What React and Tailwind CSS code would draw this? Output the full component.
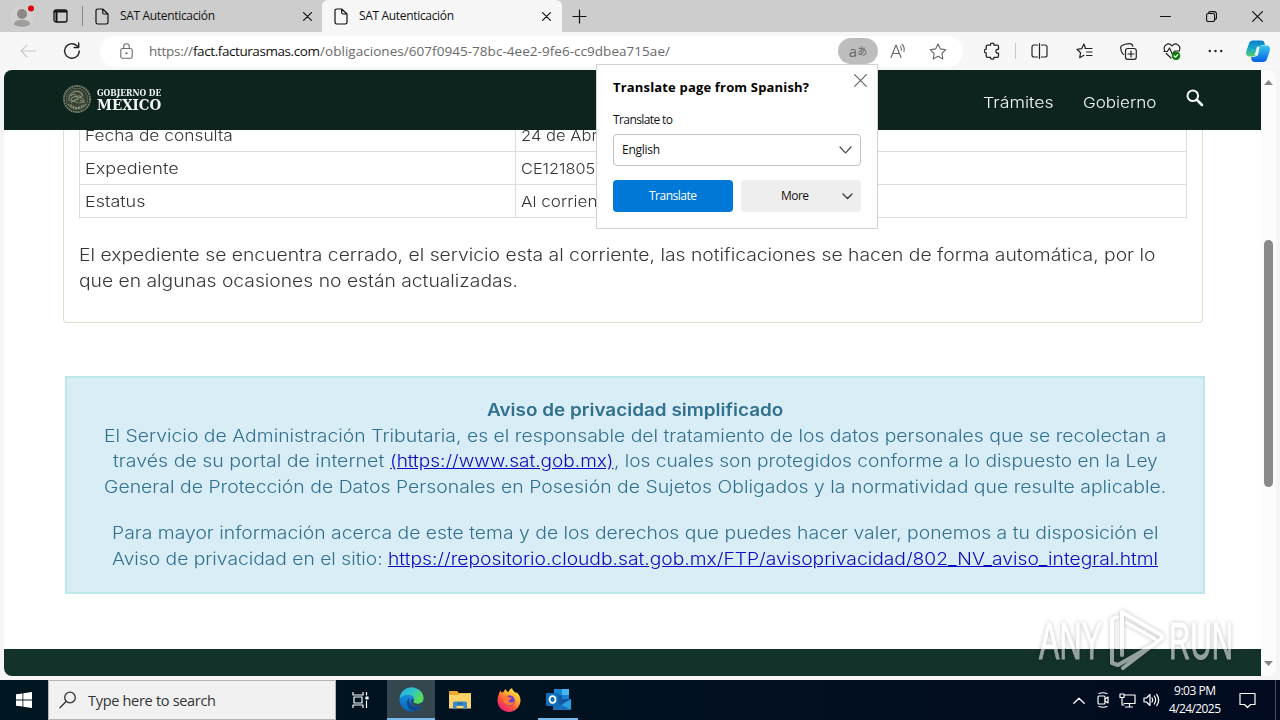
import React, { useLayoutEffect, useRef } from "react";

/* Single line of text tracked out (or in) so that it spans `w` pixels. */
function T({ w, className = "", children }) {
  const ref = useRef(null);
  useLayoutEffect(() => {
    const el = ref.current;
    el.style.letterSpacing = "0px";
    el.style.marginRight = "0px";
    const n = el.textContent.length;
    const ls = (w - el.getBoundingClientRect().width) / (n - 1);
    el.style.letterSpacing = ls + "px";
    el.style.marginRight = -ls + "px";
  }, [w]);
  return (
    <span ref={ref} className={"inline-block shrink-0 whitespace-pre " + className}>
      {children}
    </span>
  );
}

/* Single line of text whose letters are widened so that it spans `w` pixels. */
function Wide({ w, className = "", children }) {
  const ref = useRef(null);
  useLayoutEffect(() => {
    const el = ref.current;
    el.style.transform = `scaleX(${w / el.offsetWidth})`;
  }, [w]);
  return (
    <span className={"flex shrink-0 " + className} style={{ width: w }}>
      <span ref={ref} className="inline-block shrink-0 origin-left whitespace-pre">{children}</span>
    </span>
  );
}

function Icon({ w = 16, h = 16, sw = 1, className = "", children }) {
  return (
    <svg width={w} height={h} viewBox={`0 0 ${w} ${h}`} fill="none" stroke="currentColor" strokeWidth={sw} strokeLinecap="round" strokeLinejoin="round" className={"block shrink-0 " + className}>
      {children}
    </svg>
  );
}

const PageIcon = ({ className }) => (
  <Icon w={14} h={17} sw={1.2} className={className}>
    <path d="M2.7 1h5L13 6v8.300a1.700 1.700 0 0 1-1.700 1.700H2.700A1.700 1.700 0 0 1 1 14.300V2.700A1.700 1.700 0 0 1 2.700 1ZM7.700 1v3.500A1.500 1.500 0 0 0 9.200 6H13" />
  </Icon>
);

const Cross = ({ s = 9, className }) => (
  <Icon w={s} h={s} sw={1.2} className={className}>
    <path d={`M.6.6 ${s - 0.6} ${s - 0.6}M${s - 0.6} .6.6 ${s - 0.6}`} />
  </Icon>
);

function TabStrip() {
  return (
    <div className="flex h-8 bg-[#cdcdcd] text-[#111]">
      <div className="flex w-[83px] items-center">
        <svg width="30" height="26" viewBox="0 0 30 26" className="ml-2 block">
          <circle cx="14" cy="14" r="11.500" fill="#d3d1d0" />
          <circle cx="14" cy="11" r="5" fill="#8b8886" />
          <path d="M6 20.800c0-5.500 16-5.500 16 0 0 4-16 4-16 0Z" fill="#a09d9b" />
          <circle cx="23" cy="5.500" r="3" fill="#e3000f" />
        </svg>
        <Icon w={15} h={14} sw={1.3} className="ml-[15px]">
          <rect x="1" y="1" width="13" height="12" rx="2" />
          <path d="M1.500 2.500h12M3.500 4v8.500" strokeWidth="2" />
        </Icon>
        <div className="ml-auto h-5 w-px bg-[#888]" />
      </div>
      <div className="flex w-[239px] items-center">
        <PageIcon className="ml-3" />
        <T w={95} className="ml-[11px] text-xs">SAT Autenticación</T>
        <Cross className="mt-px ml-[88px]" />
      </div>
      <div className="flex w-60 items-center rounded-t-md bg-[#f7f7f7]">
        <PageIcon className="ml-3" />
        <T w={95} className="ml-[11px] text-xs">SAT Autenticación</T>
        <Cross className="mt-px ml-[88px]" />
      </div>
      <div className="flex flex-1 items-center">
        <Icon w={15} h={15} sw={1.2} className="ml-[10px]"><path d="M7.500 1v13M1 7.500h13" /></Icon>
        <div className="ml-auto flex items-center gap-[35px] pr-[17px]">
          <Icon w={11} h={11} sw={1.100}><path d="M.5 5.500h10" /></Icon>
          <Icon w={11} h={11} sw={1.100}>
            <rect x=".6" y="2.500" width="8" height="8" rx="1.500" />
            <path d="M2.500 2.300C2.500 1 3.300.6 4.300.6h3.800c1.500 0 2.400.9 2.400 2.400v3.500c0 1-.4 1.800-1.500 1.900" />
          </Icon>
          <Cross s={11} />
        </div>
      </div>
    </div>
  );
}

function CopilotIcon() {
  return (
    <svg width="24" height="22" viewBox="0 0 24 22" className="block shrink-0">
      <defs>
        <linearGradient id="cpa" x1="0" y1="0" x2="0" y2="1"><stop offset="0" stopColor="#087bd0" /><stop offset=".5" stopColor="#17a8c6" /><stop offset="1" stopColor="#58cc71" /></linearGradient>
        <linearGradient id="cpb" x1="0" y1="0" x2="0" y2="1"><stop offset="0" stopColor="#35c8ee" /><stop offset="1" stopColor="#0760e6" /></linearGradient>
      </defs>
      <path d="M7 .5h8c2 0 3 .7 3.500 2.500L19 5h-2c-2 0-3 1-3.500 2.500L11.500 14c-.6 2-2 2.500-4 2.500H3.500C.6 16.500-.4 14 .4 11L3 3.500C3.600 1.500 5 .5 7 .5Z" fill="url(#cpa)" />
      <path d="M17 22H9c-2 0-3-.7-3.500-2.500L5 17h2.500c2.500 0 3.500-1 4-2.500L13.500 8c.6-2 2-2.500 4-2.500h3c3 0 4 2.500 3.200 5.500L21 19c-.6 2-2 3-4 3Z" fill="url(#cpb)" />
      <path d="M11 6.500h2.500l-1.500 9H8.500Z" fill="#e4f8fd" />
    </svg>
  );
}

function Toolbar() {
  return (
    <div className="flex h-[38px] items-center bg-[#f7f7f7] text-[#242424]">
      <Icon w={16} h={14} sw={1.100} className="ml-5 text-[#c9c9c9]"><path d="M15.500 7H1M7 1 1 7l6 6" /></Icon>
      <Icon w={18} h={18} sw={1.400} className="ml-[27px]">
        <path d="M16.200 9A7.300 7.300 0 1 1 13.700 3.500L15.700 5.300M15.700 1v4.500h-4.500" />
      </Icon>
      <div className="ml-[19px] flex h-[31px] w-[863px] items-center rounded-full bg-white">
        <Icon w={13} h={16} sw={1.100} className="mb-px ml-5 text-[#6b6b6b]">
          <rect x=".8" y="5.500" width="11.400" height="9.700" rx="1.800" />
          <path d="M3.700 5.300V3.500a2.800 2.800 0 0 1 5.600 0v1.800" />
          <circle cx="6.500" cy="10.300" r=".6" fill="currentColor" />
        </Icon>
        <T w={44} className="ml-[16px] text-[13.500px] text-[#6a6a6a]">https://</T>
        <T w={127} className="text-[13.500px] text-[#111]">fact.facturasmas.com</T>
        <T w={350} className="text-[13.500px] text-[#6a6a6a]">/obligaciones/607f0945-78bc-4ee2-9fe6-cc9dbea715ae/</T>
        <div className="ml-auto flex h-[26px] w-10 items-center justify-center rounded-full bg-[#bdbdbd] text-[#666]">
          <span className="text-[15px] leading-none">a</span>
          <span className="font-['Noto_Sans_CJK_JP',sans-serif] text-[10px] leading-none">あ</span>
        </div>
        <Icon w={18} h={16} sw={1.100} className="ml-3 text-[#666]">
          <path d="M1 14.500 6 2l5 12.500M2.700 10.500h6.500M10.500 3.500q1.300 1.500.8 3.800M12 1.500q3 2.700 1.900 7" />
        </Icon>
        <Icon w={18} h={17} sw={1.100} className="mr-4 ml-[21px] text-[#666]">
          <path d="m9 1 2.400 4.900 5.400.8-3.900 3.800.9 5.400L9 13.300l-4.800 2.600.9-5.400L1.200 6.700l5.400-.8Z" />
        </Icon>
      </div>
      <Icon w={17} h={18} sw={1.300} className="ml-[21px]">
        <path d="M3.500 3.200h3C6 .3 10.500.3 10 3.200h3.200a1.300 1.300 0 0 1 1.300 1.300v2.800c-3.500-.5-3.500 4.300 0 3.800V14a1.300 1.300 0 0 1-1.300 1.300H10c.5 2.500-4 2.500-3.500 0h-3A1.300 1.300 0 0 1 2.200 14v-3c-2.500 0-2.500-3.800 0-3.800V4.500a1.300 1.300 0 0 1 1.300-1.300Z" />
      </Icon>
      <div className="ml-[14px] h-4 w-px bg-[#c8c8c8]" />
      <Icon w={17} h={16} sw={1.200} className="ml-[15px]">
        <path d="M6.500 2H3a2 2 0 0 0-2 2v8a2 2 0 0 0 2 2h3.500M8.500.6v14.800M10.500 2H14a2 2 0 0 1 2 2v8a2 2 0 0 1-2 2h-3.500" />
      </Icon>
      <Icon w={17} h={17} sw={1.200} className="ml-7">
        <path d="M9.500 5.300 7.900 1 5.800 5.600 1 6.300l3.600 3.400-.9 5 4.200-2.400M9 5.500h7M10.500 9H16M10.500 12.500H16" />
      </Icon>
      <Icon w={17} h={17} sw={1.200} className="ml-[27px]">
        <rect x="5.500" y="5.500" width="10.800" height="10.800" rx="2.300" />
        <path d="M3.700 11.500C1.800 11 .3 5.500.8 3.800 1.500 1.500 9 .2 11 .9c1.200.4 1.700 1.400 1.900 2.400M11 8v6M8 11h6" />
      </Icon>
      <Icon w={18} h={17} sw={1.200} className="ml-[26px]">
        <path d="M1.700 7.500C-.5 2.500 5.500-1.500 9 3c3.500-4.500 9.500-.5 7.300 4.500M.8 8.500h3.500L6.500 5l3 6.500 2-3.500h5M3.300 10.500 8 15" />
        <circle cx="13" cy="12.800" r="3.700" fill="#107c10" stroke="#107c10" />
        <path d="m11.200 13 1.300 1.200 2.400-2.600" stroke="#fff" />
      </Icon>
      <Icon w={15} h={4} sw={0} className="ml-[27px]">
        <g fill="#242424"><circle cx="1.800" cy="2" r="1.200" /><circle cx="7.500" cy="2" r="1.200" /><circle cx="13.200" cy="2" r="1.200" /></g>
      </Icon>
      <div className="ml-[23px]"><CopilotIcon /></div>
    </div>
  );
}

function Seal() {
  return (
    <svg width="30" height="30" viewBox="0 0 30 30" fill="none" className="mb-0.5 block shrink-0">
      <circle cx="15" cy="15" r="13" stroke="#757a65" strokeWidth="2" strokeDasharray="2 .5" />
      <circle cx="15" cy="15" r="11" fill="#374337" stroke="#707660" strokeWidth=".7" />
      <path d="M7 17c-1-6 5-12 11-9 3 1 3 4 1 5-2-2-4-1-4 1 3-1 6 0 7 3M9 19c3-5 5-2 8-4M8 12c4-3 6-2 7 1-3-1-5 0-6 3 2 2 5 1 7 3M12 8c3-2 7 0 9 4M18 16l4 2-5 1" stroke="#858970" strokeWidth="1.100" />
      <path d="M6 20c4 6 14 6 18 0M8.500 20.500c4 4 9 4 13 0" stroke="#8f9279" strokeWidth="1.200" strokeDasharray="2 .8" />
    </svg>
  );
}

function SiteHeader() {
  return (
    <div className="flex h-[60px] shrink-0 items-center bg-[#0c231e] text-[#f3f6f5]">
      <div className="ml-[58px]"><Seal /></div>
      <div className="mb-px ml-[5px] flex flex-col font-['DejaVu_Serif',serif] font-bold">
        <Wide w={64} className="text-[8.500px] leading-[10px]">GOBIERNO DE</Wide>
        <Wide w={64} className="text-[14.500px] leading-[13px]">MÉXICO</Wide>
      </div>
      <div className="ml-auto flex items-center font-[Inter,sans-serif] text-[15px] font-light">
        <Wide w={71} className="mt-1.5">Trámites</Wide>
        <Wide w={74} className="mt-1.5 ml-[29px]">Gobierno</Wide>
        <Icon w={18} h={18} sw={2} className="mt-[-4px] mr-[57px] ml-[29px]">
          <circle cx="6.800" cy="6.800" r="5.300" />
          <path d="m11 11 5 5" strokeWidth="2.600" />
        </Icon>
      </div>
    </div>
  );
}

function Row({ label, value, lw, vw }) {
  return (
    <div className="flex h-[33px] shrink-0 items-center border-b border-[#ddd]">
      <div className="flex h-full w-[437px] items-center border-x border-[#ddd] pt-0.5 pl-[5px]"><Wide w={lw}>{label}</Wide></div>
      <div className="flex h-full flex-1 items-center border-r border-[#ddd] pt-0.5 pl-[5px]"><Wide w={vw}>{value}</Wide></div>
    </div>
  );
}

function Page() {
  return (
    <div className="flex w-[1257px] flex-col overflow-hidden rounded-l-lg bg-white font-[Inter,sans-serif] font-light">
      <SiteHeader />
      <div className="ml-[59px] h-[193px] w-[1140px] rounded-b border-x border-b border-[#dfe0cb] px-[15px] text-[#363638]">
        <div className="flex h-[88px] flex-col justify-end overflow-hidden text-[15px]">
          <Row label="Fecha de consulta" lw={148} value="24 de Abril" vw={84} />
          <Row label="Expediente" lw={94} value="CE121805" vw={74} />
          <Row label="Estatus" lw={61} value="Al corriente" vw={91} />
        </div>
        <div className="mt-6 flex flex-col text-[17px] leading-[26px]">
          <Wide w={1076}>El expediente se encuentra cerrado, el servicio esta al corriente, las notificaciones se hacen de forma automática, por lo</Wide>
          <Wide w={439}>que en algunas ocasiones no están actualizadas.</Wide>
        </div>
      </div>
      <div className="mt-[53px] ml-[61px] flex h-[218px] w-[1140px] shrink-0 flex-col items-center border-2 border-[#bce8ea] bg-[#d9edf7] pt-5 text-[17px] leading-[25.500px] text-[#31708f]">
        <Wide w={296} className="font-semibold">Aviso de privacidad simplificado</Wide>
        <Wide w={1062}>El Servicio de Administración Tributaria, es el responsable del tratamiento de los datos personales que se recolectan a</Wide>
        <div className="flex">
          <Wide w={277}>{"través de su portal de internet "}</Wide>
          <Wide w={224} className="text-[#0a0ac0] underline">(https://www.sat.gob.mx)</Wide>
          <Wide w={544}>, los cuales son protegidos conforme a lo dispuesto en la Ley</Wide>
        </div>
        <Wide w={1062}>General de Protección de Datos Personales en Posesión de Sujetos Obligados y la normatividad que resulte aplicable.</Wide>
        <Wide w={1046} className="mt-[21px]">Para mayor información acerca de este tema y de los derechos que puedes hacer valer, ponemos a tu disposición el</Wide>
        <div className="flex">
          <Wide w={276}>{"Aviso de privacidad en el sitio: "}</Wide>
          <Wide w={770} className="text-[#0a0ac0] underline">https://repositorio.cloudb.sat.gob.mx/FTP/avisoprivacidad/802_NV_aviso_integral.html</Wide>
        </div>
      </div>
      <div className="mt-auto h-[27px] shrink-0 bg-[#13322b]" />
    </div>
  );
}

function Scrollbar() {
  return (
    <div className="flex w-[15px] flex-col items-center rounded-r-lg bg-[#fcfcfc] py-[10px]">
      <svg width="9" height="5" viewBox="0 0 9 5" className="block shrink-0"><path d="M4.500 0 9 5H0Z" fill="#858585" /></svg>
      <div className="mt-[155px] h-[247px] w-[9px] rounded-full bg-[#8a8a8a]" />
      <svg width="9" height="5" viewBox="0 0 9 5" className="mt-auto block shrink-0"><path d="M0 0h9L4.500 5Z" fill="#858585" /></svg>
    </div>
  );
}

function TranslatePopup() {
  return (
    <div className="absolute top-16 left-[596px] flex h-[165px] w-[282px] flex-col border border-[#d2d2d2] bg-white px-4 text-xs text-[#111]">
      <div className="flex h-[44px] items-center">
        <T w={196} className="mt-0.5 text-[13px] font-bold text-black">Translate page from Spanish?</T>
        <Cross s={13} className="mt-[-14px] ml-[45px] text-[#666]" />
      </div>
      <div className="flex h-[25px] items-center pb-[3px]"><T w={60}>Translate to</T></div>
      <div className="flex h-8 items-center justify-between rounded-sm border border-[#c2c2c2] pr-2 pl-2">
        <T w={38}>English</T>
        <Icon w={13} h={8} sw={1.200} className="text-[#444]"><path d="m1 1 5.500 5.800L12 1" /></Icon>
      </div>
      <div className="mt-[14px] flex gap-2">
        <div className="flex h-8 w-[120px] items-center justify-center rounded-sm bg-[#0078d7] text-white"><T w={48}>Translate</T></div>
        <div className="flex h-8 w-[120px] items-center rounded-sm bg-[#eee]">
          <T w={28} className="ml-10">More</T>
          <Icon w={11} h={7} sw={1.400} className="ml-[33px] text-[#444]"><path d="m1 1 4.500 4.600L10 1" /></Icon>
        </div>
      </div>
    </div>
  );
}

function Watermark() {
  return (
    <svg width="200" height="68" viewBox="0 0 200 68" fill="none" className="absolute top-[606px] left-[1036px] block opacity-55 drop-shadow-[0_0_2px_rgba(0,0,0,0.45)]">
      <g fill="#fff" stroke="#fff" strokeWidth="1" fontFamily="'Liberation Sans', sans-serif" fontSize="51">
        <text x="3" y="53" textLength="63" lengthAdjust="spacingAndGlyphs">ANY</text>
        <text x="133" y="53" textLength="64" lengthAdjust="spacingAndGlyphs">RUN</text>
      </g>
      <g stroke="#fff" strokeWidth="4" strokeLinejoin="round" strokeLinecap="round">
        <path d="M81 11 76 13V57l6 2 37-21M86 49V6l40 23.500v2.500L87 62" />
        <path d="M91 17l28 16" strokeWidth="3.500" />
      </g>
    </svg>
  );
}

const EdgeIcon = () => (
  <svg width="25" height="25" viewBox="0 0 24 24" className="block">
    <defs>
      <linearGradient id="ea" x1="0" y1="0" x2="1" y2=".5"><stop offset="0" stopColor="#2aa9e8" /><stop offset=".55" stopColor="#30c7c8" /><stop offset="1" stopColor="#5ade4f" /></linearGradient>
      <linearGradient id="eb" x1="0" y1="0" x2="0" y2="1"><stop offset="0" stopColor="#1ba0e4" /><stop offset="1" stopColor="#0a62bc" /></linearGradient>
    </defs>
    <circle cx="12" cy="12" r="11.500" fill="url(#eb)" />
    <path d="M.6 11C1.500 4 6.500.5 12 .5c7 0 11.500 5 11.500 10 0 4-3 5.500-6 5.500-2.500 0-4.500-1-3.500-2.300C16 10.500 13 7.500 9 7.500c-4 0-7 1.500-8.400 3.500Z" fill="url(#ea)" />
    <path d="M9.500 10.500c-3.500 3-2 11 4.500 12.500 4-.5 6.500-2.500 8-5.500-5 3-13 1-12.500-7Z" fill="#114a8b" />
    <path d="M14 13.500c-1 1.500 1 2.700 3.500 2.700 2.300 0 4.200-.8 5.300-2.200L25 17l-3 .8c-5 2-11 0-10.500-5 .7-2 2.500-1.300 2.500.7Z" fill="#34474f" />
  </svg>
);

const FolderIcon = () => (
  <svg width="22" height="20" viewBox="0 0 22 20" className="block">
    <path d="M0 1.500Q0 1 .7 1H8l2 2h11.300q.7 0 .7.700V18H0Z" fill="#e9a92c" />
    <path d="M0 5h9l2-1.500h11V18.500H0Z" fill="#fbd568" />
    <path d="M4 19v-6q0-1.500 1.500-1.500h11Q18 11.500 18 13v6h-3.500v-3h-7v3Z" fill="#3b8ccb" />
    <path d="M8 12.500h6v2H8Z" fill="#276ca3" />
  </svg>
);

const FirefoxIcon = () => (
  <svg width="24" height="24" viewBox="0 0 24 24" className="block">
    <defs>
      <linearGradient id="fa" x1=".9" y1="0" x2=".2" y2="1"><stop offset="0" stopColor="#fff44f" /><stop offset=".35" stopColor="#ffb22e" /><stop offset=".65" stopColor="#ff5638" /><stop offset="1" stopColor="#e31587" /></linearGradient>
    </defs>
    <path d="M2 6c.2-1.500 1-2.800 1.700-3.500.1 1 .6 1.700 1 2L6.500 4C7 2.500 8 1.500 9 1c0 1.500.7 2.500 2.500 3C12 2 13.500.8 15 0c.5 3 3 3.500 4.500 5.500V4C23 7 24 11 23.300 14.500 22 20 17.500 24 12 24 5.500 24 .5 19 .5 12.500.5 10 1 8 2 6Z" fill="url(#fa)" />
    <circle cx="12.500" cy="12.500" r="5.300" fill="#6f3fd0" />
    <path d="M6 8c3-.8 5 0 6 1.500l3 .3c-1 2-3 1.600-3.500 3 .5 2.500 4.500 2.200 6 .2-.5 5-9 6.500-11 0-.8-2-.8-3.500-.5-5Z" fill="#ff7a2f" />
  </svg>
);

const OutlookIcon = () => (
  <svg width="25" height="23" viewBox="0 0 25 23" className="block">
    <path d="M8 1h15v11H8Z" fill="#1784d8" /><path d="M16 1h7v6h-7Z" fill="#45b6ee" /><path d="M8 7h8v6H8Z" fill="#0c5aa6" />
    <path d="M7 11h18v10q0 1-1 1H8q-1 0-1-1Z" fill="#2ba0e2" /><path d="m7 12 18 10H8q-1 0-1-1Z" fill="#1b6fb9" /><path d="m25 11-10 6-8-5v-1Z" fill="#1557a0" />
    <rect x="0" y="5" width="13" height="13" rx="1.200" fill="#0f6cbd" />
    <ellipse cx="6.500" cy="11.500" rx="3" ry="3.300" fill="none" stroke="#fff" strokeWidth="1.800" />
  </svg>
);

function Taskbar() {
  return (
    <div className="flex h-10 items-center bg-linear-to-r from-[#001620] to-[#020b20] text-white">
      <div className="flex w-12 justify-center">
        <svg width="16" height="16" viewBox="0 0 16 16" fill="#fff"><path d="M0 2.300 6.500 1.400v6.200H0ZM7.300 1.300 16 0v7.600H7.300ZM0 8.400h6.500v6.200L0 13.700ZM7.300 8.400H16V16l-8.700-1.300Z" /></svg>
      </div>
      <div className="flex h-10 w-72 items-center border border-[#b5b5b5] bg-[#f1f1f1] text-[#333]">
        <Icon w={18} h={18} sw={1.300} className="ml-[10px]"><circle cx="11" cy="6.500" r="5.300" /><path d="m7 10.500-6 6.300" /></Icon>
        <T w={128} className="mt-0.5 ml-[11px] text-[14.500px]">Type here to search</T>
      </div>
      <div className="flex w-[51px] justify-center pr-0.5">
        <Icon w={17} h={16} sw={1.200}>
          <path d="M1 .5V3h10V.5M1 15.500V13h10v2.500M2 5h8v6H2ZM14.500.5V3M14.500 9v6.500" />
          <rect x="14" y="5" width="2" height="2" fill="currentColor" />
        </Icon>
      </div>
      <div className="flex h-10 w-12 items-center justify-center border-b-2 border-[#76b9ed] bg-[#34474f]"><EdgeIcon /></div>
      <div className="flex w-[50px] justify-center"><FolderIcon /></div>
      <div className="flex w-12 justify-center"><FirefoxIcon /></div>
      <div className="ml-[5px] flex h-10 w-10 items-center justify-center border-b-2 border-[#76b9ed]"><OutlookIcon /></div>
      <div className="ml-auto flex h-10 items-center">
        <Icon w={12} h={7} sw={1.300}><path d="m.8 6.200 5.200-5 5.200 5" /></Icon>
        <Icon w={12} h={16} sw={1.200} className="ml-3">
          <rect x="1" y="4" width="7" height="8" rx="1" /><path d="m8 7 3-2v6L8 9M2 1.500q4-1.500 8 0M2 14.500q4 1.500 8 0" />
        </Icon>
        <Icon w={17} h={15} sw={1.200} className="ml-[10px]">
          <path d="M6 2h10v8.500H5M10.500 10.500V14M6.500 14h7M1 1h4v3.500H1ZM3 4.500V12h2" />
        </Icon>
        <Icon w={17} h={14} sw={1.200} className="ml-[7px]">
          <path d="M1 5h2.500L7 1.500v11L3.500 9H1ZM9 5q1.300 2 0 4M11.300 3q2.700 4 0 8M13.700 1.300q4 5.700 0 11.400" />
        </Icon>
        <div className="ml-2 flex w-[54px] flex-col items-center text-xs leading-[18px]">
          <T w={42}>9:03 PM</T>
          <T w={52}>4/24/2025</T>
        </div>
        <Icon w={17} h={17} sw={1.200} className="ml-[17px]"><path d="M1 1.500h15v11h-4.500l-3 3-3-3H1Z" /></Icon>
        <div className="ml-[19px] h-10 w-[5px] border-l border-[#44505e]" />
      </div>
    </div>
  );
}

export default function App() {
  return (
    <div className="relative flex h-[720px] w-[1280px] flex-col overflow-hidden bg-[#f5f5f5] font-['Open_Sans','Noto_Sans',sans-serif]">
      <TabStrip />
      <Toolbar />
      <div className="flex h-[610px] px-1 pb-1">
        <Page />
        <Scrollbar />
      </div>
      <Taskbar />
      <TranslatePopup />
      <Watermark />
    </div>
  );
}
